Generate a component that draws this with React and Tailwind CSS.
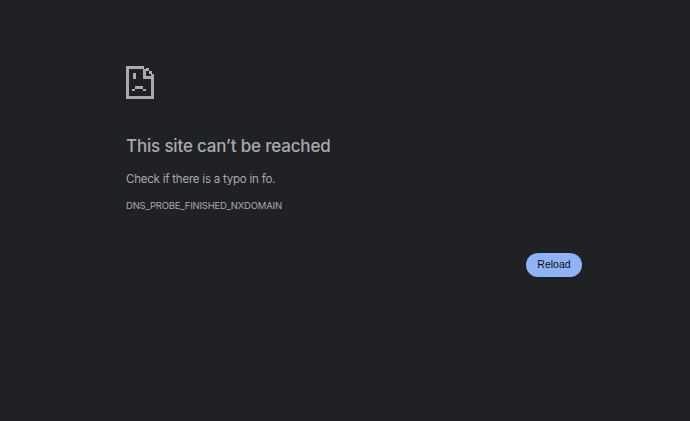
const SadPage = () => (
  <svg width="28" height="33" viewBox="0 0 28 33" fill="#a8aaad" shapeRendering="crispEdges">
    <path d="M0 0h18v3H3v27h22V13h3v20H0z" />
    <path d="M17 3h3v7h8v3H17zM20 2h3v3h-3zM23 5h3v3h-3zM25 8h3v2h-3z" />
    <path d="M7 7h3v6H7zM9 20h8v3H9zM6 23h3v2H6zM17 23h3v2h-3z" />
  </svg>
);

export default function App() {
  return (
    <div className="w-[690px] h-[421px] bg-[#202124] overflow-hidden pl-[126px] pt-[66px] font-['Inter',sans-serif]">
      <div className="w-[456px] flex flex-col">
        <SadPage />
        <h1 className="mt-[35px] text-[17px] leading-[24px] font-medium tracking-[-0.18px] text-[#a8aaad]">This site can’t be reached</h1>
        <p className="mt-[13px] text-[11.5px] leading-[16px] tracking-[-0.22px] text-[#a8aaad]">Check if there is a typo in fo.</p>
        <div className="mt-[13px] text-[9.5px] leading-[12px] tracking-[-0.2px] text-[#a8aaad]">DNS_PROBE_FINISHED_NXDOMAIN</div>
        <div className="mt-[41px] flex justify-end">
          <button className="w-[56px] h-[24px] rounded-full bg-[#8fb3f6] text-[#0b0c0e] text-[10.5px] font-['Liberation_Sans',sans-serif]">Reload</button>
        </div>
      </div>
    </div>
  );
}
